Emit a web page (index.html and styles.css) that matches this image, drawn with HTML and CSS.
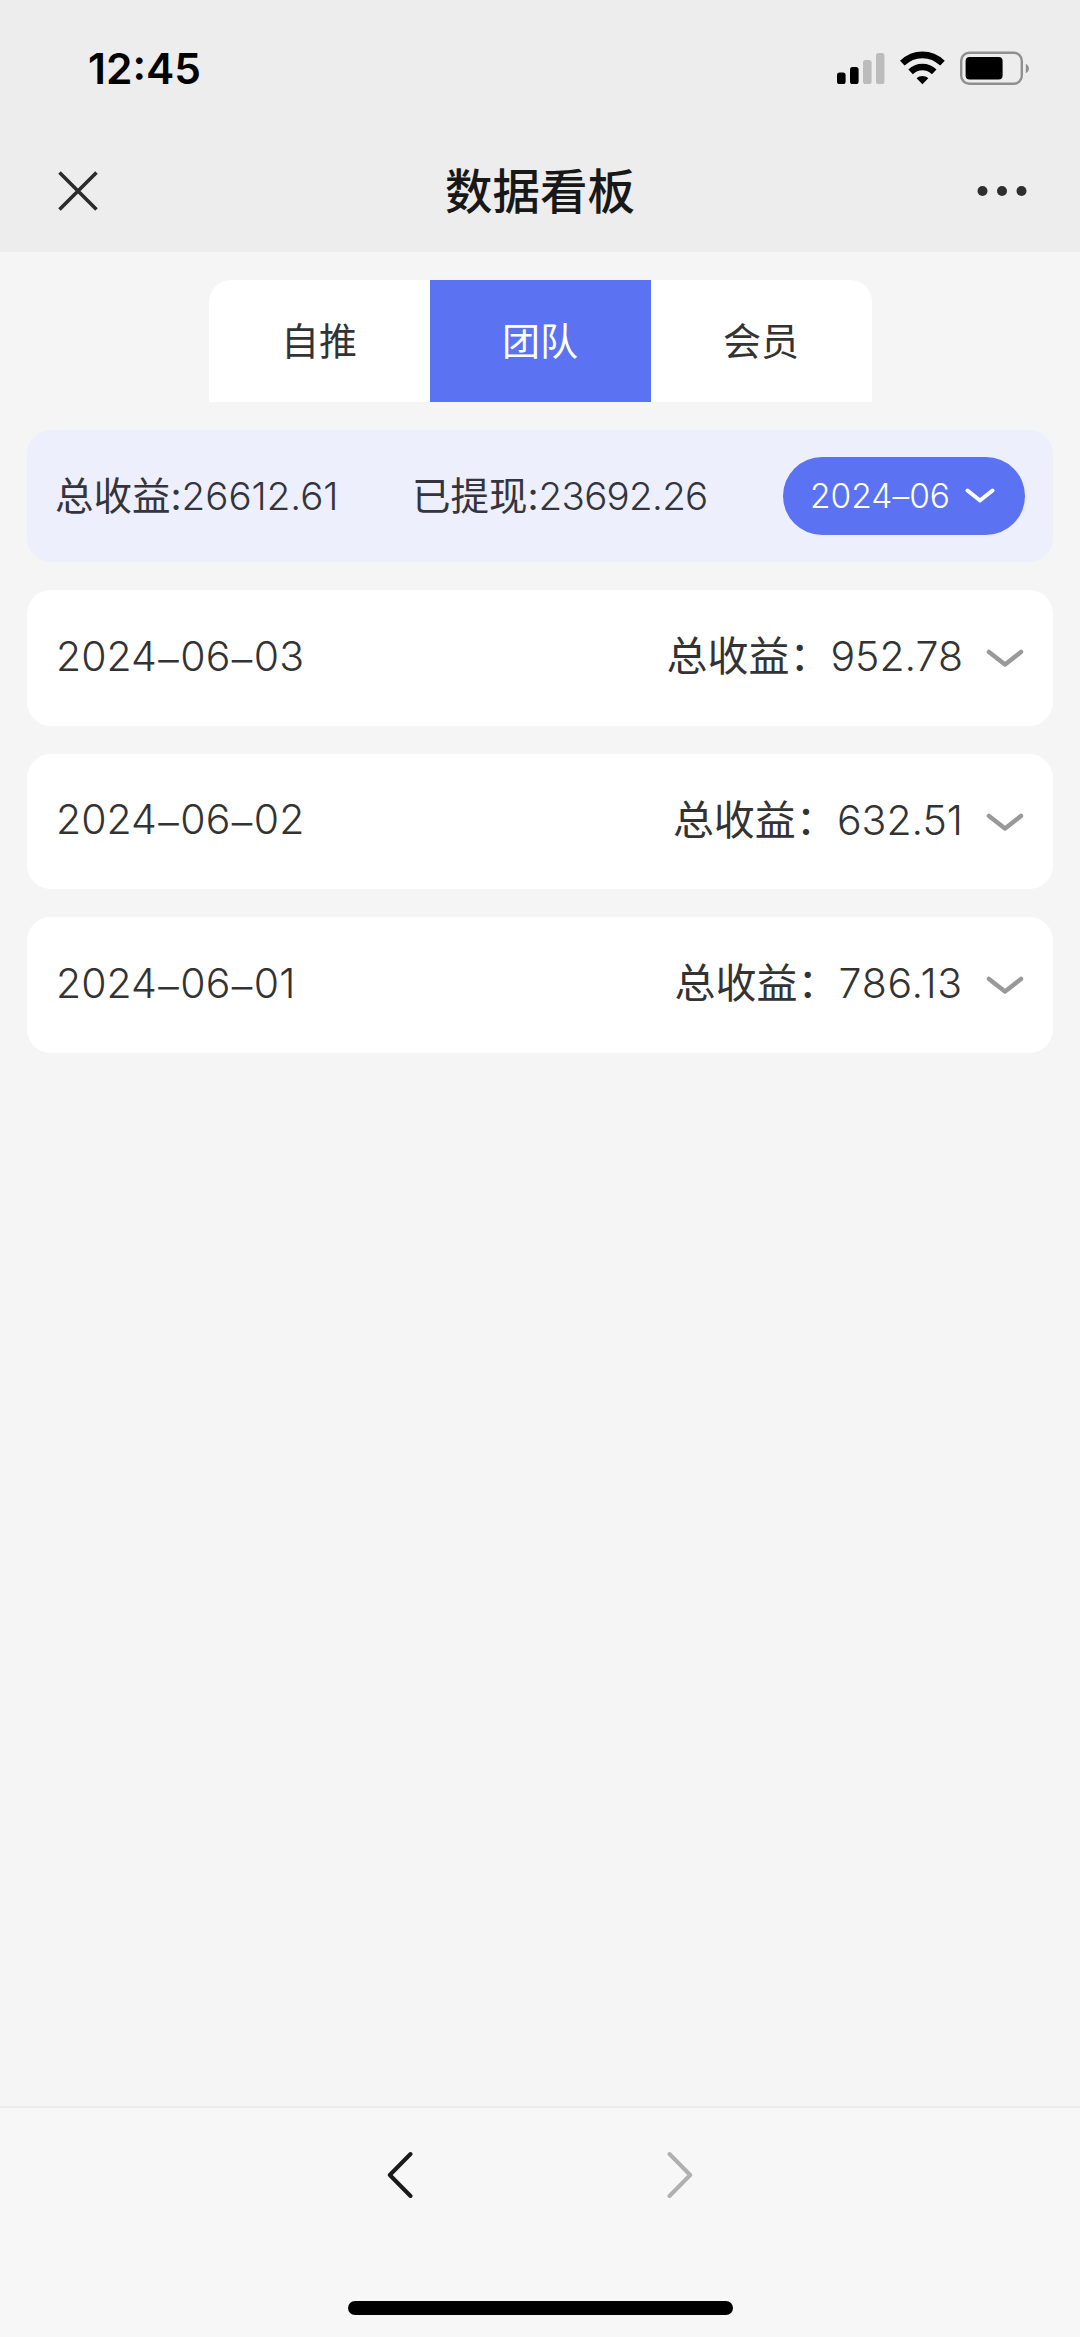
FILE: index.html
```html
<!DOCTYPE html>
<html lang="zh-CN">
<head>
<meta charset="utf-8">
<title>数据看板</title>
<link rel="stylesheet" href="styles.css">
</head>
<body>
<div class="screen">
  <header class="header">
    <div class="status">
      <span class="time">12:45</span>
      <svg class="indicators" width="192" height="34" viewBox="0 0 192 34">
        <rect x="0" y="21.5" width="8.6" height="11.5" rx="2.6"/>
        <rect x="13" y="16" width="8.6" height="17" rx="2.6"/>
        <g fill="#bcbcbc"><rect x="26" y="9" width="8.6" height="24" rx="2.6"/><rect x="39" y="2" width="8.4" height="31" rx="2.6"/></g>
        <g fill="none" stroke="#000" stroke-width="6.6">
          <path d="M65.3 12.2C77 1.1 93.8 1.1 105.500 12.2"/>
          <path d="M73.600 20.800C80.300 14.400 90.500 14.400 97.200 20.800"/>
        </g>
        <path d="M79.600 27.200C82.900 24.200 88 24.200 91.300 27.200L85.400 33.200Z"/>
        <rect x="124.200" y="1.800" width="60.600" height="31" rx="8" fill="none" stroke="#8f8f8f" stroke-width="2.400"/>
        <rect x="128.600" y="6" width="37" height="22.600" rx="4"/>
        <path d="M188.800 12.700C193 15 193 20 188.800 22.300Z" fill="#8f8f8f"/>
      </svg>
    </div>
    <div class="nav">
      <svg class="close" width="42" height="42" viewBox="0 0 42 42"><path d="M2.500 2.500L39.500 39.500M39.500 2.500L2.500 39.500"/></svg>
      <h1 class="title">数据看板</h1>
      <svg class="more" width="50" height="12" viewBox="0 0 50 12"><circle cx="5.500" cy="6" r="5"/><circle cx="25" cy="6" r="5"/><circle cx="44.500" cy="6" r="5"/></svg>
    </div>
  </header>

  <main class="content">
    <div class="tabs">
      <div class="tab">自推</div>
      <div class="tab active">团队</div>
      <div class="tab">会员</div>
    </div>
    <section class="summary">
      <span class="total">总收益:<span class="num">26612.61</span></span>
      <span class="withdrawn">已提现:<span class="num">23692.26</span></span>
      <div class="month">
        <span class="month-text">2024<i>–</i>06</span>
        <svg width="30" height="16" viewBox="0 0 30 16"><path d="M2.500 2.500L15 12.500L27.500 2.500"/></svg>
      </div>
    </section>
    <div class="row">
      <span class="date">2024<i>–</i>06<i>–</i>03</span>
      <span class="amount">总收益：<span class="num">952.78</span></span>
      <svg class="chevron" width="38" height="20" viewBox="0 0 38 20"><path d="M3 3L19 15.500L35 3"/></svg>
    </div>
    <div class="row">
      <span class="date">2024<i>–</i>06<i>–</i>02</span>
      <span class="amount">总收益：<span class="num">632.51</span></span>
      <svg class="chevron" width="38" height="20" viewBox="0 0 38 20"><path d="M3 3L19 15.500L35 3"/></svg>
    </div>
    <div class="row">
      <span class="date">2024<i>–</i>06<i>–</i>01</span>
      <span class="amount">总收益：<span class="num wide">786.13</span></span>
      <svg class="chevron" width="38" height="20" viewBox="0 0 38 20"><path d="M3 3L19 15.500L35 3"/></svg>
    </div>
  </main>

  <footer class="footer">
    <div class="history">
      <svg class="back" width="26" height="48" viewBox="0 0 26 48"><path d="M23.500 3L2.800 24L23.500 45"/></svg>
      <svg class="forward" width="26" height="48" viewBox="0 0 26 48"><path d="M2.500 3L23.200 24L2.500 45"/></svg>
    </div>
    <div class="home"></div>
  </footer>
</div>
</body>
</html>
```
FILE: styles.css
```css
* { box-sizing: border-box; }
body { margin: 0; background: #f5f5f5; font-family: Inter, "Noto Sans CJK SC", sans-serif; color: #333; }
svg { display: block; flex: none; }
i { font-style: normal; }

.screen { width: 1080px; height: 2337px; display: flex; flex-direction: column; overflow: hidden; }

.header { height: 252px; flex: none; background: #ededed; }
.status { height: 132px; padding: 4px 51px 0 88px; display: flex; align-items: center; justify-content: space-between; }
.time { font-size: 42.5px; font-weight: 600; color: #000; }
.nav { height: 118px; padding: 0 53px 0 57px; display: grid; grid-template-columns: 50px 1fr 54px; align-items: center; }
.close { fill: none; stroke: #2b2b2b; stroke-width: 3.6; }
.title { margin: 0; padding-bottom: 4px; text-align: center; font: 500 47.5px/60px "Noto Sans CJK SC", sans-serif; color: #181818; }
.more { justify-self: end; fill: #2e2e2e; }

.content { flex: 1; padding: 28px 27px 0; display: flex; flex-direction: column; gap: 28px; }
.tabs { width: 663px; height: 122px; align-self: center; display: grid; grid-template-columns: repeat(3, 1fr); background: #fff; border-radius: 22px 22px 0 0; overflow: hidden; }
.tab { padding-bottom: 4px; display: flex; align-items: center; justify-content: center; font: 400 38px/56px "Noto Sans CJK SC", sans-serif; }
.tab.active { background: #5b73f2; color: #fff; }

.summary { height: 132px; padding: 0 28px; border-radius: 24px; background: #edeffd; display: flex; align-items: center; font-size: 38.5px; color: #33343c; }
.num, .date { font-weight: 350; }
.month-text { font-weight: 300; }
.total, .withdrawn { padding-bottom: 6px; white-space: nowrap; }
.total { width: 357px; }
.withdrawn .num { letter-spacing: -0.7px; }
.month { width: 242px; height: 78px; margin-left: auto; padding: 0 30px 0 27px; border-radius: 39px; background: #5b73f2; color: #fff; display: flex; align-items: center; justify-content: space-between; font-size: 33.5px; }
.month i { position: relative; top: 2px; }
.month path { fill: none; stroke: #fff; stroke-width: 4; stroke-linecap: round; stroke-linejoin: round; }

.row { height: 135.500px; padding: 0 29px; border-radius: 24px; background: #fff; display: flex; align-items: center; font-size: 41px; }
.date { padding-bottom: 4px; }
.date i { position: relative; top: 3px; margin: 0 1.500px; }
.amount { margin-left: auto; margin-right: 23px; padding-bottom: 9px; white-space: nowrap; }
.wide { letter-spacing: 0.8px; }
.chevron { margin-top: 3px; }
.chevron path { fill: none; stroke: #999; stroke-width: 4.500; stroke-linecap: round; stroke-linejoin: round; }

.footer { height: 231px; flex: none; border-top: 2px solid #ebebeb; background: #f7f7f7; display: flex; flex-direction: column; align-items: center; justify-content: space-between; padding: 43px 0 22px; }
.history { width: 306px; display: flex; justify-content: space-between; }
.history path { fill: none; stroke-width: 4; stroke-linecap: round; stroke-linejoin: round; }
.back { stroke: #1a1a1a; }
.forward { stroke: #b0b0b0; }
.home { width: 385px; height: 14px; border-radius: 7px; background: #000; }
```
